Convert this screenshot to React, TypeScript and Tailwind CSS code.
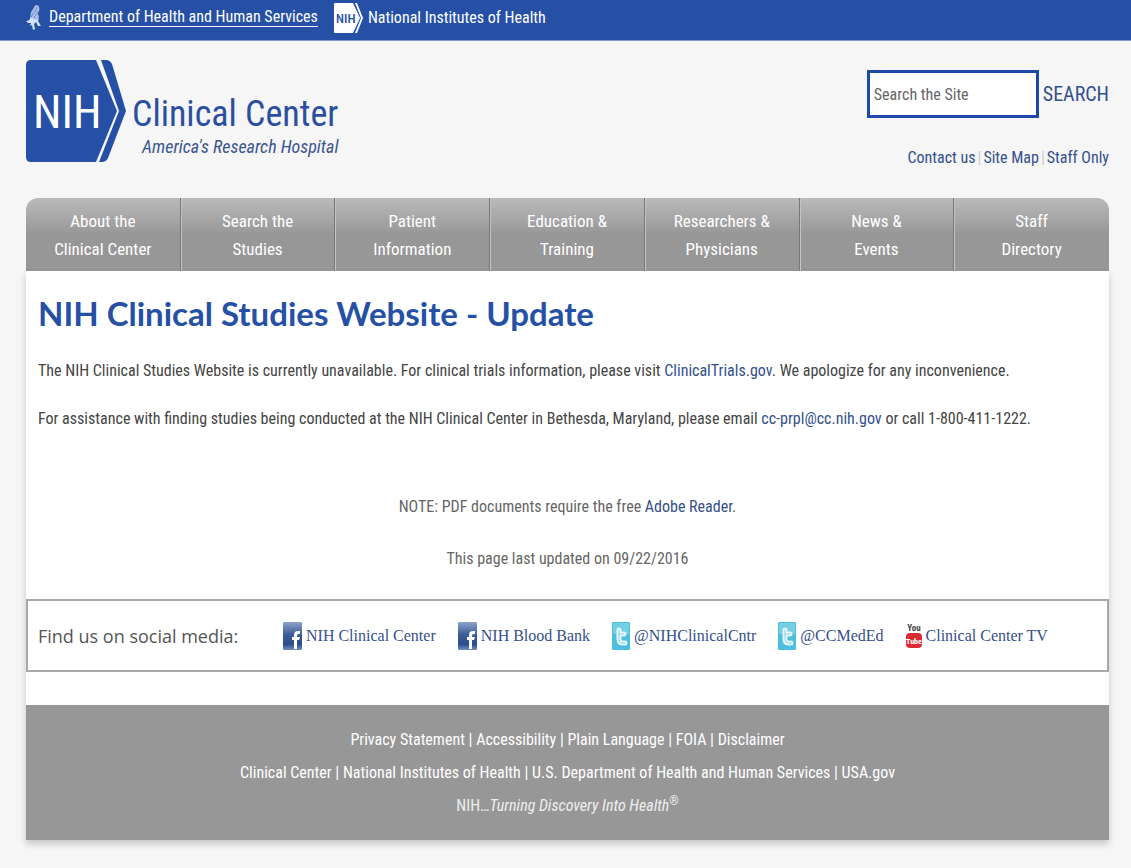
import type { ReactNode } from 'react';

const NAV_ITEMS = [
  ['About the', 'Clinical Center'],
  ['Search the', 'Studies'],
  ['Patient', 'Information'],
  ['Education &', 'Training'],
  ['Researchers &', 'Physicians'],
  ['News &', 'Events'],
  ['Staff', 'Directory'],
];

const FOOTER_LINKS = [
  ['Privacy Statement', 'Accessibility', 'Plain Language', 'FOIA', 'Disclaimer'],
  ['Clinical Center', 'National Institutes of Health', 'U.S. Department of Health and Human Services', 'USA.gov'],
];

const LOGO_FONT = "'Roboto Condensed', 'Liberation Sans', Arial, sans-serif";

function HhsLogo() {
  return (
    <svg width="15" height="27" viewBox="0 0 15 27" fill="none" aria-hidden="true">
      <path d="M10 1c3 0 4 3 3 6l-1 3 1 3-3 4H5l-1-2 1-7c2-2 3-6 5-7Z" fill="#a9c0e8" />
      <path d="M11 3C10 8 6 9 5 14M12 7c-1 4-4 5-5 9" stroke="#6486c8" />
      <path d="M5 13c-1 3-3 4-5 4l2 2h3l-1 3 2-1 1 5 2-1-1-5 2-2 2 4h3l-3-5 1-3-3 2Z" fill="#d3e2f8" />
    </svg>
  );
}

function NihBadge() {
  return (
    <svg width="30" height="30" viewBox="0 0 30 30" aria-hidden="true">
      <path d="M1 0h18l7 15-7 15H1q-1 0-1-1V1q0-1 1-1Z" fill="#fff" />
      <path d="M21 0h2l6 15-6 15h-2l6-15Z" fill="#fff" />
      <text x="2" y="20" fontSize="13" fontWeight="500" fill="#2550a5" fontFamily={LOGO_FONT}>NIH</text>
    </svg>
  );
}

function ClinicalCenterLogo() {
  return (
    <svg width="316" height="102" viewBox="0 0 316 102" role="img" aria-label="NIH Clinical Center, America's Research Hospital">
      <path d="M5 0h65l21 51-21 51H5q-5 0-5-5V5q0-5 5-5Z" fill="#2550a5" />
      <path d="M75 0h5q4 0 6 4l14 47-18 47q-2 4-6 4h-3l20-51Z" fill="#2550a5" />
      <g fontFamily={LOGO_FONT}>
        <text x="7" y="68" fontSize="46" fill="#fff">NIH</text>
        <text x="106" y="66" fontSize="36" fill="#2b4fa0">Clinical Center</text>
        <text x="116" y="93" fontSize="18" fontStyle="italic" fill="#3a5590">America's Research Hospital</text>
      </g>
    </svg>
  );
}

function FacebookIcon() {
  return (
    <svg width="19" height="28" viewBox="0 0 19 28" aria-hidden="true">
      <defs>
        <linearGradient id="fb" x2="0" y2="1">
          <stop stopColor="#8ea3c8" />
          <stop offset=".45" stopColor="#3c5c98" />
          <stop offset=".8" stopColor="#2b4c8c" />
          <stop offset="1" stopColor="#7690c4" />
        </linearGradient>
      </defs>
      <rect width="19" height="28" rx="1" fill="url(#fb)" />
      <path d="M11 27V18H9v-3h2v-2q0-4 4-4h2v3h-1q-2 0-2 2v1h3l-1 3h-2v9Z" fill="#fff" />
    </svg>
  );
}

function TwitterIcon() {
  return (
    <svg width="18" height="28" viewBox="0 0 18 28" aria-hidden="true">
      <rect width="18" height="28" rx="1" fill="#4bbfdd" />
      <rect x="1" y="1" width="16" height="11" fill="#74cfe5" />
      <path d="M7 8v9q0 4 3 4h3M7 12h5" fill="none" stroke="#e4f7fb" strokeWidth="5" strokeLinecap="round" />
      <path d="M7 8v9q0 4 3 4h3M7 12h5" fill="none" stroke="#8fd6e8" strokeWidth="1" strokeLinecap="round" />
    </svg>
  );
}

function YouTubeIcon() {
  return (
    <svg width="16" height="27" viewBox="0 0 16 27" aria-hidden="true">
      <g fontFamily={LOGO_FONT} fontWeight="700" textAnchor="middle">
        <text x="8" y="9" fontSize="9" fill="#444">You</text>
        <rect y="11" width="16" height="15" rx="4" fill="#dc2a33" />
        <text x="8" y="22" fontSize="8" fill="#fff">Tube</text>
      </g>
    </svg>
  );
}

function SocialLink({ icon, label }: { icon: ReactNode; label: string }) {
  return (
    <a href="#" className="flex items-center gap-1 whitespace-nowrap font-['Liberation_Serif',serif] text-base text-[#34508c]">
      {icon}
      {label}
    </a>
  );
}

export default function App() {
  return (
    <div className="min-h-screen bg-[#f6f6f6] font-['Roboto_Condensed','Liberation_Sans',Arial,sans-serif] text-base text-[#444]">
      {/* Government bar */}
      <div className="flex h-[41px] items-start border-b border-[#7f97c9] bg-[#2550a5] pl-[26px] pt-[3px] leading-7 text-white">
        <a href="#" className="flex items-center gap-2">
          <HhsLogo />
          <span className="underline underline-offset-4">Department of Health and Human Services</span>
        </a>
        <a href="#" className="ml-4 flex items-center gap-1">
          <NihBadge />
          <span>National Institutes of Health</span>
        </a>
      </div>

      <div className="ml-[26px] mr-[22px]">
        <header className="flex items-start justify-between pb-7 pt-[19px]">
          <a href="#"><ClinicalCenterLogo /></a>
          <div className="flex flex-col items-end pt-[10px] text-[#34508c]">
            <form className="flex items-center gap-1" onSubmit={(e) => e.preventDefault()}>
              <input type="text" aria-label="Search the Site" defaultValue="Search the Site"
                className="h-12 w-[172px] border-[3px] border-[#1d49a8] bg-white px-1 text-[#666] outline-none" />
              <button type="submit" className="text-xl">SEARCH</button>
            </form>
            <div className="mt-7 flex gap-[2px] leading-6">
              <a href="#">Contact us</a>
              <span className="text-[#ccc]">|</span>
              <a href="#">Site Map</a>
              <span className="text-[#ccc]">|</span>
              <a href="#">Staff Only</a>
            </div>
          </div>
        </header>

        <nav className="grid grid-cols-7 overflow-hidden rounded-t-xl bg-linear-to-b from-[#bababa] to-[#979797] to-50%">
          {NAV_ITEMS.map(([top, bottom]) => (
            <a key={top} href="#" className="h-[73px] border-r border-[#777] pt-[9px] text-center text-[17px] leading-7 text-white shadow-[1px_0_0_#c4c4c4] last:border-r-0">
              {top}<br />{bottom}
            </a>
          ))}
        </nav>

        <div className="shadow-[0_4px_7px_rgba(0,0,0,0.2)]">
          <main className="bg-white pb-[33px]">
            <div className="px-3 pt-4">
              <h1 className="font-[Lato,sans-serif] text-[33px] font-bold leading-[52px] text-[#2550a5]">NIH Clinical Studies Website - Update</h1>
              <p className="mt-4 leading-8">
                The NIH Clinical Studies Website is currently unavailable. For clinical trials information, please visit{' '}
                <a href="#" className="text-[#34508c]">ClinicalTrials.gov</a>. We apologize for any inconvenience.
              </p>
              <p className="mt-4 leading-8">
                For assistance with finding studies being conducted at the NIH Clinical Center in Bethesda, Maryland, please email{' '}
                <a href="#" className="text-[#34508c]">cc-prpl@cc.nih.gov</a> or call 1-800-411-1222.
              </p>
            </div>
            <div className="pt-14 text-center leading-8 text-[#666]">
              <p>NOTE: PDF documents require the free <a href="#" className="text-[#34508c]">Adobe Reader</a>.</p>
              <p className="mt-5">This page last updated on 09/22/2016</p>
            </div>

            {/* Social media */}
            <div className="mt-6 flex h-[73px] items-center border-2 border-[#a8a8a8] pl-[10px]">
              <span className="w-[245px] whitespace-nowrap font-['Open_Sans',sans-serif] text-lg text-[#555]">Find us on social media:</span>
              <div className="flex gap-[22px]">
                <SocialLink icon={<FacebookIcon />} label="NIH Clinical Center" />
                <SocialLink icon={<FacebookIcon />} label="NIH Blood Bank" />
                <SocialLink icon={<TwitterIcon />} label="@NIHClinicalCntr" />
                <SocialLink icon={<TwitterIcon />} label="@CCMedEd" />
                <SocialLink icon={<YouTubeIcon />} label="Clinical Center TV" />
              </div>
            </div>
          </main>

          <footer className="bg-[#979797] py-[18px] text-center leading-[33px] text-white">
            {FOOTER_LINKS.map((row) => (
              <p key={row[0]}>
                {row.map((label, i) => (
                  <span key={label}>
                    {i > 0 && ' | '}
                    <a href="#">{label}</a>
                  </span>
                ))}
              </p>
            ))}
            <p className="text-[#eee]">
              NIH…<em>Turning Discovery Into Health</em><sup className="text-xs">®</sup>
            </p>
          </footer>
        </div>
      </div>
    </div>
  );
}
